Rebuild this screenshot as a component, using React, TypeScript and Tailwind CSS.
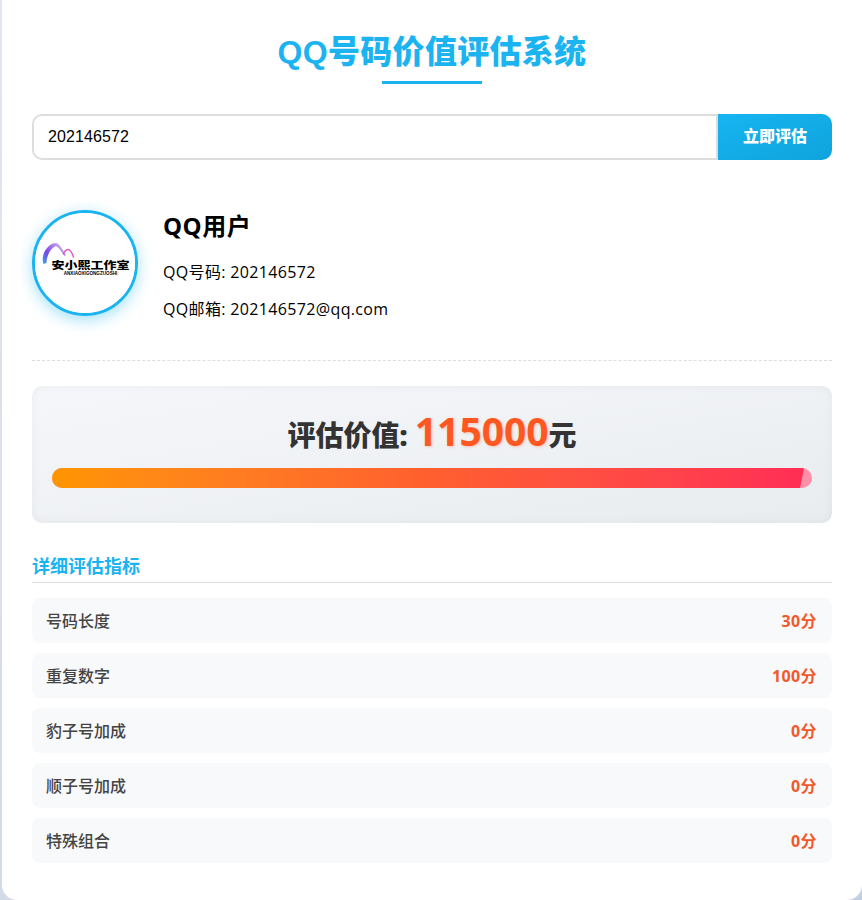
const rows = [
  ["号码长度", "30分"],
  ["重复数字", "100分"],
  ["豹子号加成", "0分"],
  ["顺子号加成", "0分"],
  ["特殊组合", "0分"],
];

const cjk = "font-['Liberation_Sans','Noto_Sans_CJK_SC',sans-serif]";
const body = "font-['Open_Sans','Noto_Sans_CJK_SC',sans-serif]";

function Logo() {
  return (
    <div className="relative flex h-[100px] w-[100px] shrink-0 flex-col items-center justify-center overflow-hidden rounded-full bg-white pl-[11px]">
      <svg width="36" height="28" viewBox="0 0 36 28" fill="none" className="absolute left-[5px] top-[28px]">
        <defs>
          <linearGradient id="ribbon" x1="2" y1="24" x2="24" y2="2" gradientUnits="userSpaceOnUse">
            <stop offset="0" stopColor="#2fb4ea" />
            <stop offset="0.4" stopColor="#7a45e2" />
            <stop offset="0.75" stopColor="#b78ce8" />
            <stop offset="1" stopColor="#e3cdf0" />
          </linearGradient>
        </defs>
        <path d="M3.5 23C0 14 8 2 16 2C19 2 22 8 26 14L24.5 15C20 9 17.5 4.5 15 5.5C10.5 7.5 6.5 15 6.5 22Z" fill="url(#ribbon)" />
        <path d="M23.5 13C26 7 30 6 33.5 16" stroke="#d95fc4" strokeWidth="1.5" strokeLinecap="round" />
      </svg>
      <span className={`relative mt-[9px] origin-center scale-y-[0.78] whitespace-nowrap text-[13px] font-black leading-[13px] text-black ${cjk}`}>安小熙工作室</span>
      <span className={`relative mt-[-1px] whitespace-nowrap text-[4.6px] font-bold leading-[5px] text-black ${cjk}`}>ANXIAOXIGONGZUOSHI</span>
    </div>
  );
}

export default function App() {
  return (
    <div className="h-[900px] overflow-hidden bg-gradient-to-br from-[#e2e6ee] to-[#c3cfe2] pl-[2px]">
      <div className="h-[900px] w-[860px] rounded-b-[15px] bg-white px-[30px] pt-[28px]">
        <h1 className={`text-center text-[32px] font-black leading-[48px] tracking-[0.3px] text-[#1bb3f0] ${cjk}`}>QQ号码价值评估系统</h1>
        <div className="mx-auto mt-[5px] h-[3px] w-[100px] bg-[#1bb3f0]"></div>

        <div className="mt-[30px] flex h-[46px]">
          <div className={`flex flex-1 items-center rounded-l-[10px] border-2 border-[#dddddd] pl-[14px] text-[16px] tracking-[0.1px] text-black ${cjk}`}>202146572</div>
          <div className={`flex w-[114px] items-center justify-center rounded-r-[10px] bg-gradient-to-br from-[#16b5f2] to-[#0fa3dc] text-[16px] font-black text-white ${cjk}`}>立即评估</div>
        </div>

        <div className="mt-[50px] flex gap-[25px]">
          <div className="h-[106px] w-[106px] shrink-0 rounded-full border-[3px] border-[#1bb3f0] shadow-[0_4px_15px_rgba(27,179,240,0.4)]">
            <Logo />
          </div>
          <div className={`text-black ${body}`}>
            <div className="text-[24px] font-bold leading-[32px] tracking-[0.5px]">QQ用户</div>
            <div className="mt-[19px] text-[16px] leading-[22px] tracking-[0.35px]">QQ号码: 202146572</div>
            <div className="mt-[15px] text-[16px] leading-[22px] tracking-[0.35px]">QQ邮箱: 202146572@qq.com</div>
          </div>
        </div>

        <div className="mt-[40px] border-b border-dashed border-[#dddddd]"></div>

        <div className="mt-[25px] h-[137px] rounded-[10px] bg-gradient-to-br from-[#f5f7fa] to-[#e9ecef] px-[20px] pt-[20px] shadow-[inset_0_0_10px_rgba(0,0,0,0.05)]">
          <div className={`flex h-[50px] items-baseline justify-center text-[28px] font-black leading-[50px] text-[#333333] ${body}`}>
            <span>评估价值:&nbsp;</span>
            <span className="text-[39px] font-bold text-[#ff5722] [text-shadow:1px_1px_3px_rgba(255,87,34,0.3)]">115000</span>
            <span>元</span>
          </div>
          <div className="mt-[12px] h-[20px] overflow-hidden rounded-[10px] bg-[#ff8fa6]">
            <div className="h-full w-[752px] bg-gradient-to-r from-[#ff9500] via-[#ff5f2e] to-[#ff2d55] [clip-path:polygon(0_0,100%_0,calc(100%-4px)_100%,0_100%)]"></div>
          </div>
        </div>

        <div className={`mt-[30px] border-b border-[#dddddd] pb-[2px] text-[18px] font-bold leading-[27px] text-[#1bb3f0] ${body}`}>详细评估指标</div>

        <div className="mt-[15px] flex flex-col gap-[10px]">
          {rows.map(([label, score]) => (
            <div key={label} className={`flex h-[45px] items-center justify-between rounded-[8px] bg-[#f8f9fa] pl-[14px] pr-[15px] text-[16px] ${body}`}>
              <span className="font-medium text-[#444444]">{label}</span>
              <span className="font-bold tracking-[0.4px] text-[#f0592b]">{score}</span>
            </div>
          ))}
        </div>
      </div>
    </div>
  );
}
